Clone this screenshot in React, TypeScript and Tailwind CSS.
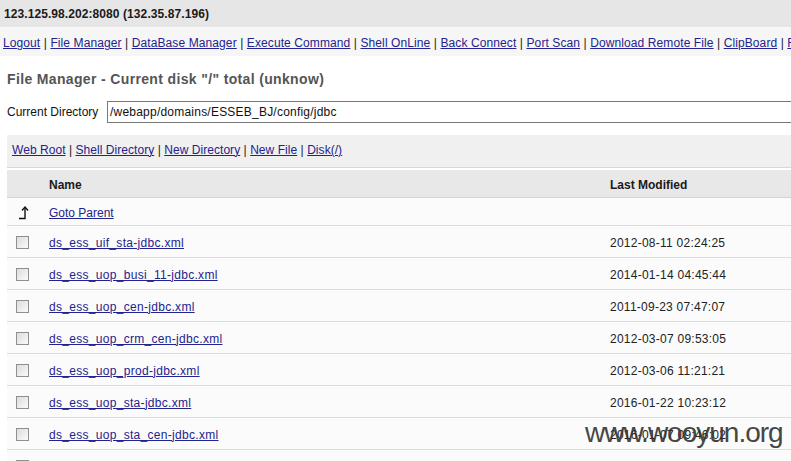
import React from "react";

const navLinks = [
  "Logout",
  "File Manager",
  "DataBase Manager",
  "Execute Command",
  "Shell OnLine",
  "Back Connect",
  "Port Scan",
  "Download Remote File",
  "ClipBoard",
  "Remote Control",
  "Port Map",
];

const toolLinks = ["Web Root", "Shell Directory", "New Directory", "New File", "Disk(/)"];

const files: [string, string][] = [
  ["ds_ess_uif_sta-jdbc.xml", "2012-08-11 02:24:25"],
  ["ds_ess_uop_busi_11-jdbc.xml", "2014-01-14 04:45:44"],
  ["ds_ess_uop_cen-jdbc.xml", "2011-09-23 07:47:07"],
  ["ds_ess_uop_crm_cen-jdbc.xml", "2012-03-07 09:53:05"],
  ["ds_ess_uop_prod-jdbc.xml", "2012-03-06 11:21:21"],
  ["ds_ess_uop_sta-jdbc.xml", "2016-01-22 10:23:12"],
  ["ds_ess_uop_sta_cen-jdbc.xml", "2016-01-07 09:46:02"],
  ["ds_ess_uop_web-jdbc.xml", "2012-03-06 11:21:40"],
];

const linkCls = "text-[#23238e] underline underline-offset-[1px] decoration-[1px]";

function Checkbox() {
  return (
    <span className="inline-block w-[13px] h-[13px] border border-[#8f8f8f] bg-gradient-to-br from-[#dcdcdc] to-[#fbfbfb]" />
  );
}

function ParentIcon() {
  return (
    <svg width="12" height="14" viewBox="0 0 12 14" className="block">
      <path d="M1 12.5 H7 V2" stroke="#111" strokeWidth="1.4" fill="none" />
      <path d="M4 4.5 L7 1 L10 4.5" stroke="#111" strokeWidth="1.3" fill="none" />
    </svg>
  );
}

export default function App() {
  return (
    <div
      className="relative w-[791px] h-[461px] overflow-hidden bg-white text-[12px] text-[#111]"
      style={{ fontFamily: '"Liberation Sans", Arial, sans-serif' }}
    >
      <div className="h-[28px] bg-[#e6e6e6] border-b border-[#f9f9f9] flex items-center pl-[4px] font-bold text-[12px] tracking-[0.08px] text-[#1a1a1a]">
        123.125.98.202:8080 (132.35.87.196)
      </div>
      <div className="h-[28px] bg-[#f6f6f6] flex items-center pl-[3px] pt-[2px] whitespace-nowrap tracking-[0.1px]">
        {navLinks.map((l, i) => (
          <React.Fragment key={l}>
            {i > 0 && <span className="text-[#222]">&nbsp;|&nbsp;</span>}
            <span className={linkCls}>{l}</span>
          </React.Fragment>
        ))}
      </div>
      <div className="pl-[7px] pt-[13px] h-[44px] font-bold text-[14px] tracking-[0.35px] text-[#555]">
        File Manager - Current disk "/" total (unknow)
      </div>
      <div className="flex items-center pl-[7px] h-[22px] mt-[1px]">
        <span className="w-[100px] shrink-0">Current Directory</span>
        <div className="w-[720px] shrink-0 h-[22px] border border-[#777] bg-white flex items-center pl-[2px] tracking-[0.22px]">
          /webapp/domains/ESSEB_BJ/config/jdbc
        </div>
      </div>
      <div className="ml-[7px] mt-[12px] h-[33px] bg-[#f0f0f0] border-b border-[#d8d8d8] flex items-center pl-[5px] pb-[2px] whitespace-nowrap tracking-[0.05px]">
        {toolLinks.map((l, i) => (
          <React.Fragment key={l}>
            {i > 0 && <span className="text-[#222]">&nbsp;|&nbsp;</span>}
            <span className={linkCls}>{l}</span>
          </React.Fragment>
        ))}
      </div>
      <div className="ml-[7px] mt-[2px]">
        <div className="h-[28px] bg-[#e8e8e8] border-b border-[#d4d4d4] flex items-center pt-[2px] font-bold text-[#1a1a1a]">
          <div className="w-[42px] shrink-0" />
          <div className="w-[561px] shrink-0">Name</div>
          <div>Last Modified</div>
        </div>
        <div className="h-[28px] bg-[#fbfbfb] border-b border-[#dcdcdc] flex items-center pt-[2px]">
          <div className="w-[42px] shrink-0 pl-[11px]">
            <ParentIcon />
          </div>
          <div className={linkCls}>Goto Parent</div>
        </div>
        {files.map(([name, date]) => (
          <div key={name} className="h-[32px] bg-[#fbfbfb] border-b border-[#dcdcdc] flex items-center pt-[2px]">
            <div className="w-[42px] shrink-0 pl-[9px] flex items-center">
              <Checkbox />
            </div>
            <div className="w-[561px] shrink-0 tracking-[0.3px]">
              <span className={linkCls}>{name}</span>
            </div>
            <div className="text-[#222] tracking-[0.25px]">{date}</div>
          </div>
        ))}
      </div>
      <div
        className="absolute left-[585px] top-[412px] text-[28px] tracking-[-1px] text-[#333] opacity-90 pointer-events-none"
        style={{ fontFamily: '"Liberation Sans", Arial, sans-serif' }}
      >
        www.wooyun.org
      </div>
    </div>
  );
}
